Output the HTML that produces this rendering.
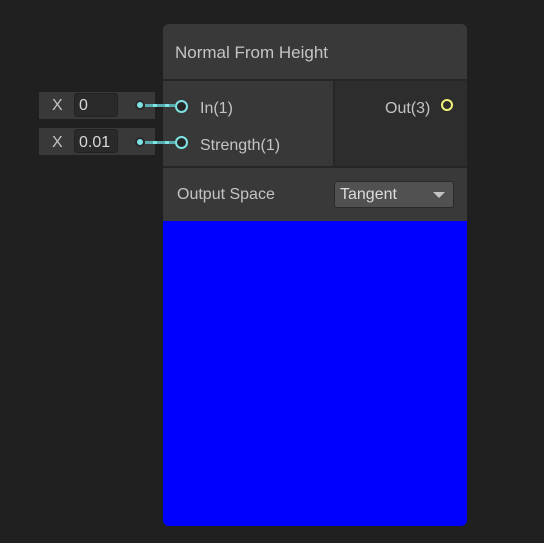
<!DOCTYPE html><html><head><style>
body{margin:0;width:544px;height:543px;background:#202020;font-family:"Liberation Sans",sans-serif;position:relative;overflow:hidden}
div{position:absolute;box-sizing:border-box}
.t{color:#c4c4c4;font-size:16px;white-space:nowrap}
</style></head><body>
<div style="left:163px;top:24px;width:304px;height:502px;border-radius:6px;background:#393939;overflow:hidden">
 <div style="left:0;top:0;width:304px;height:55px;background:#393939"></div>
 <div class="t" style="left:12px;top:19px;font-size:17px">Normal From Height</div>
 <div style="left:0;top:55px;width:304px;height:2px;background:#262626"></div>
 <div style="left:0;top:57px;width:170px;height:85px;background:#383838"></div>
 <div style="left:170px;top:57px;width:2px;height:85px;background:#262626"></div>
 <div style="left:172px;top:57px;width:132px;height:85px;background:#2d2d2d"></div>
 <div style="left:0;top:142px;width:304px;height:2px;background:#262626"></div>
 <div style="left:12px;top:76px;width:13px;height:13px;border:2px solid #7fe3e6;border-radius:50%;background:#262626"></div>
 <div class="t" style="left:37px;top:76px">In(1)</div>
 <div style="left:12px;top:112px;width:13px;height:13px;border:2px solid #7fe3e6;border-radius:50%;background:#262626"></div>
 <div class="t" style="left:37px;top:113px">Strength(1)</div>
 <div class="t" style="left:222px;top:76px">Out(3)</div>
 <div style="left:278px;top:75px;width:12px;height:12px;border:2px solid #f2f27a;border-radius:50%"></div>
 <div class="t" style="left:14px;top:162px">Output Space</div>
 <div style="left:171px;top:157px;width:120px;height:27px;background:#515151;border:1px solid #2a2a2a;border-radius:3px"></div>
 <div class="t" style="left:177px;top:162px;color:#dcdcdc">Tangent</div>
 <div style="left:270px;top:168px;width:0;height:0;border-left:6px solid transparent;border-right:6px solid transparent;border-top:6px solid #c4c4c4"></div>
 <div style="left:0;top:197px;width:304px;height:305px;background:#0000ff"></div>
</div>
<div style="left:39px;top:92px;width:116px;height:27px;background:#393939"></div>
<div class="t" style="left:52px;top:97px">X</div>
<div style="left:74px;top:93px;width:44px;height:24px;background:#2a2a2a;border:1px solid #222;border-radius:3px"></div>
<div class="t" style="left:79px;top:97px;color:#d8d8d8">0</div>
<div style="left:39px;top:128px;width:116px;height:27px;background:#393939"></div>
<div class="t" style="left:52px;top:134px">X</div>
<div style="left:74px;top:129px;width:44px;height:24px;background:#2a2a2a;border:1px solid #222;border-radius:3px"></div>
<div class="t" style="left:79px;top:134px;color:#d8d8d8">0.01</div>
<div style="left:135px;top:100px;width:10px;height:10px;border-radius:50%;background:#7fe3e6;border:2px solid #2a2a2a"></div>
<div style="left:135px;top:137px;width:10px;height:10px;border-radius:50%;background:#7fe3e6;border:2px solid #2a2a2a"></div>
<div style="left:145px;top:104px;width:30px;height:3px;background:repeating-linear-gradient(90deg,#5aaeb0 0 8px,#7fe3e6 8px 12px)"></div>
<div style="left:145px;top:141px;width:30px;height:3px;background:repeating-linear-gradient(90deg,#5aaeb0 0 8px,#7fe3e6 8px 12px)"></div>
</body></html>
